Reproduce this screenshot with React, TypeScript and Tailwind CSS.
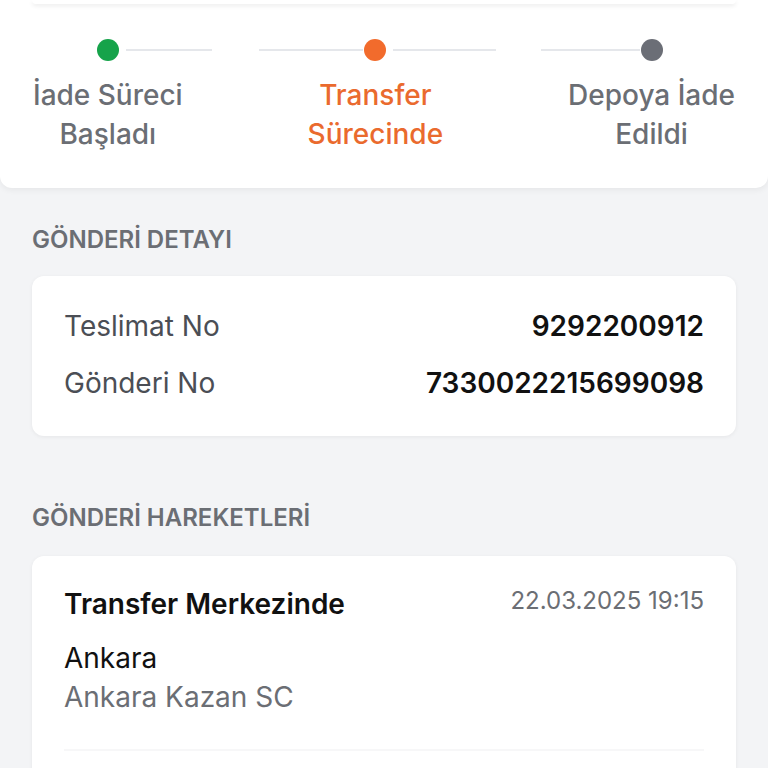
import React from "react";

const steps = [
  { lines: ["İade Süreci", "Başladı"], dot: "bg-[#16a34a]", text: "text-[#6b6e74]", left: 0, right: 86 },
  { lines: ["Transfer", "Sürecinde"], dot: "bg-[#f26b2c]", text: "text-[#ea6a2e]", left: 104, right: 103 },
  { lines: ["Depoya İade", "Edildi"], dot: "bg-[#6b6e76]", text: "text-[#6b6e74]", left: 99, right: 0 },
];

const details = [
  { label: "Teslimat No", value: "9292200912" },
  { label: "Gönderi No", value: "7330022215699098" },
];

function Step({ lines, dot, text, left, right }: (typeof steps)[number]) {
  return (
    <div className="flex flex-col items-center">
      <div className="relative h-[22px] w-[22px]">
        <div className={`h-[22px] w-[22px] rounded-full ${dot}`} />
        {left > 0 && (
          <div className="absolute top-[10px] h-[2px] bg-[#e5e7eb]" style={{ right: 23, width: left }} />
        )}
        {right > 0 && (
          <div className="absolute top-[10px] h-[2px] bg-[#e5e7eb]" style={{ left: 29, width: right }} />
        )}
      </div>
      <div className={`mt-[15px] text-center text-[28px] font-medium leading-[39px] ${text}`}>
        {lines.map((l) => (
          <div key={l}>{l}</div>
        ))}
      </div>
    </div>
  );
}

export default function App() {
  return (
    <div className="min-h-[768px] bg-[#f3f4f6] font-['Inter',sans-serif]">
      {/* Stepper */}
      <div className="rounded-b-xl bg-white shadow-[0_2px_6px_rgba(0,0,0,0.06)]">
        <div className="mx-8 h-[4px] rounded-b-xl bg-white shadow-[0_2px_4px_rgba(0,0,0,0.08)]" />
        <div className="flex justify-between pl-[33px] pr-[33px] pt-[35px] pb-[34px]">
          {steps.map((s) => (
            <Step key={s.lines[0]} {...s} />
          ))}
        </div>
      </div>

      <div className="px-8">
        <h2 className="mt-[36px] text-[24px] font-semibold leading-[32px] text-[#6b6e74]">GÖNDERİ DETAYI</h2>

        <div className="mt-[20px] flex flex-col gap-[18px] rounded-xl bg-white px-8 pt-[31px] pb-[33px] shadow-[0_1px_4px_rgba(0,0,0,0.06)]">
          {details.map((d) => (
            <div key={d.label} className="flex items-center justify-between text-[28px] leading-[39px]">
              <span className="text-[#4b4e55]">{d.label}</span>
              <span className="font-semibold text-[#111111]">{d.value}</span>
            </div>
          ))}
        </div>

        <h2 className="mt-[66px] text-[24px] font-semibold leading-[32px] text-[#6b6e74]">GÖNDERİ HAREKETLERİ</h2>

        <div className="mt-[22px] rounded-xl bg-white px-8 pt-[29px] pb-8 shadow-[0_1px_4px_rgba(0,0,0,0.06)]">
          <div className="flex items-start justify-between">
            <span className="text-[28px] font-semibold leading-[39px] text-[#111111]">Transfer Merkezinde</span>
            <span className="text-[24px] leading-[32px] text-[#6b6e74]">22.03.2025 19:15</span>
          </div>
          <div className="mt-[15px] text-[28px] leading-[39px] text-[#111111]">Ankara</div>
          <div className="text-[28px] leading-[39px] text-[#6b6e74]">Ankara Kazan SC</div>
          <div className="mt-[32px] h-[2px] bg-[#f7f7f8]" />
          <div className="h-[60px]" />
        </div>
      </div>
    </div>
  );
}
